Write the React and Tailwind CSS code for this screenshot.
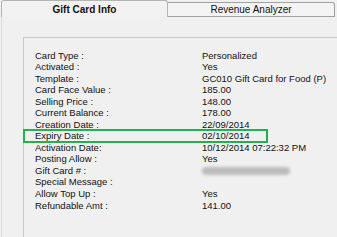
import React from 'react';

const rows = [
  ['Card Type :', 'Personalized'],
  ['Activated :', 'Yes'],
  ['Template :', 'GC010 Gift Card for Food (P)'],
  ['Card Face Value :', '185.00'],
  ['Selling Price :', '148.00'],
  ['Current Balance :', '178.00'],
  ['Creation Date :', '22/09/2014'],
  ['Expiry Date :', '02/10/2014', 'mark'],
  ['Activation Date:', '10/12/2014 07:22:32 PM'],
  ['Posting Allow :', 'Yes'],
  ['Gift Card # :', '', 'blur'],
  ['Special Message :', ''],
  ['Allow Top Up :', 'Yes'],
  ['Refundable Amt :', '141.00'],
];

export default function App() {
  return (
    <div
      className="w-[337px] h-[237px] overflow-hidden bg-[#f0f0f0] text-[#111]"
      style={{ fontFamily: '"Liberation Sans", Arial, sans-serif' }}
    >
      {/* Tabs */}
      <div className="flex h-[17px] items-end">
        <div className="w-[167px] h-[17px] ml-[1px] mt-[1px] border-t border-l border-r border-[#b4b4b4] rounded-t-[3px] bg-[#f2f2f2] flex items-center justify-center text-[10px] font-bold">
          Gift Card Info
        </div>
        <div className="flex-1 flex">
          <div className="flex-1 h-[15px] mr-[2px] border-t border-r border-b border-[#a0a0a0] rounded-tr-[3px] bg-[#f4f4f4] flex items-center justify-center text-[10px]">
            Revenue Analyzer
          </div>
        </div>
      </div>

      {/* Page body */}
      <div className="h-[220px] ml-[1px] border-l border-[#dcdcdc] pl-[21px] pt-[20px]">
        <div className="h-full border-t border-l border-[#c8c8c8] pl-[11px] pt-[12px]">
          <div className="flex flex-col text-[9.5px]">
            {rows.map(([label, value, kind]) => (
              <div key={label} className="relative flex h-[11.54px] items-center">
                {kind === 'mark' && (
                  <div className="absolute left-[-12px] top-[-2px] w-[245px] h-[14px] border-2 border-[#22b14c]" />
                )}
                <div className="w-[167px] shrink-0">{label}</div>
                <div>
                  {kind === 'blur' ? (
                    <div className="w-[88px] h-[8px] rounded-sm bg-[#bcbcbc] blur-[1.5px]" />
                  ) : (
                    value
                  )}
                </div>
              </div>
            ))}
          </div>
        </div>
      </div>
    </div>
  );
}
